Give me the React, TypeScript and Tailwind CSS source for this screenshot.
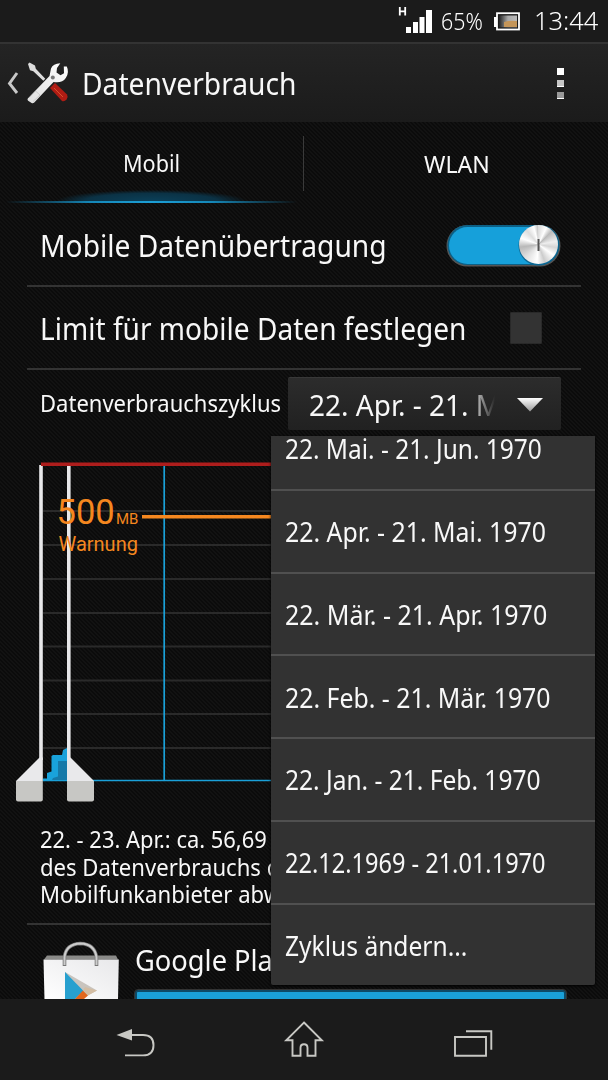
import clsx from "clsx"
import type { ReactNode } from "react"

interface MenuItem {
  label: string
  scale: string
}

const cycles: MenuItem[] = [
  { label: "22. Mai. - 21. Jun. 1970", scale: "scale-x-[0.905]" },
  { label: "22. Apr. - 21. Mai. 1970", scale: "scale-x-[0.92]" },
  { label: "22. Mär. - 21. Apr. 1970", scale: "scale-x-[0.925]" },
  { label: "22. Feb. - 21. Mär. 1970", scale: "scale-x-[0.92]" },
  { label: "22. Jan. - 21. Feb. 1970", scale: "scale-x-[0.908]" },
  { label: "22.12.1969 - 21.01.1970", scale: "scale-x-[0.872]" },
  { label: "Zyklus ändern...", scale: "scale-x-[0.91]" },
]

const gridLines = [511, 545, 579, 613, 646.5, 680.5, 714, 748]

function Label({ children, className }: { children: ReactNode; className?: string }) {
  return (
    <span className={clsx("inline-block origin-left whitespace-nowrap", className ?? "scale-x-[0.94]")}>
      {children}
    </span>
  )
}

function StatusBar() {
  return (
    <header className="flex h-[44px] shrink-0 items-center border-b-2 border-[#333] bg-[#1b1b1b] text-white">
      <svg className="ml-[396px] h-[42px] w-[40px]" viewBox="396 0 40 42">
        <path d="M399.8 7v8.500M405.2 7v8.500M399.8 11.300h5.4" stroke="#fff" strokeWidth="1.8" fill="none" />
        <path d="M406 27h5v6h-5zM413 22h5v11h-5zM419.500 17h5v16h-5zM426 10h6v23h-6z" fill="#fff" />
      </svg>
      <Label className="ml-[5px] w-[50px] scale-x-[0.93] text-[23px] font-light">65%</Label>
      <svg className="h-[42px] w-[30px]" viewBox="491 0 30 42">
        <defs>
          <linearGradient id="cell" x1="0" x2="1">
            <stop offset="0" stopColor="#222" />
            <stop offset="0.5" stopColor="#aaa" />
            <stop offset="1" stopColor="#bbb" />
          </linearGradient>
        </defs>
        <path d="M494 17h3v10h-3z" fill="#fff" />
        <rect x="497" y="13.200" width="22" height="16.300" fill="#1b1b1b" stroke="#fff" strokeWidth="1.800" />
        <rect x="499" y="15.500" width="18" height="11.800" fill="url(#cell)" />
        <path d="M504 22q5-2 13-1v6h-13z" fill="#c49558" />
      </svg>
      <Label className="ml-[13px] scale-x-[0.96] text-[26.5px] font-light">13:44</Label>
    </header>
  )
}

function ToolsIcon() {
  return (
    <svg className="h-[44px] w-[44px]" viewBox="26 61 44 44">
      <defs>
        <linearGradient id="steel" x1="1" y1="0" x2="0" y2="1">
          <stop offset="0" stopColor="#fff" />
          <stop offset="1" stopColor="#dedede" />
        </linearGradient>
      </defs>
      <path d="M28 64l1.500-1.500 5.500 3 .8 3.200 9.500 10-2 2-10-9.500-3.300-1z" fill="#ddd" />
      <path d="M50 88l5-5 12 11.500q1.500 2.500-.5 5t-4.500 1.500z" fill="#b01c14" />
      <path d="M54 88l9 9" stroke="#d9502c" strokeWidth="1" />
      <path
        d="M60.300 63.300Q53 63.500 51 68.500L49.500 76 27.800 98.500q-.8 1.300.3 2.300l3.500 2.300q1.500.6 2.700-.6L53.500 82q8.500 1.500 12.300-4 3.800-5.500 1-11.500L63.800 66.500 64 73.200 60.500 75.200 56.500 72.500 57 68z"
        fill="url(#steel)"
      />
      <circle cx="52.800" cy="77.500" r="2" fill="#777" />
      <path d="M35.500 91l4.500 4-7 6.500M35.500 91l-6 6.500" fill="none" stroke="#bbb" strokeWidth=".6" />
    </svg>
  )
}

function ActionBar() {
  return (
    <div className="flex h-[78px] shrink-0 items-center bg-gradient-to-b from-[#242424] to-[#1b1b1b] pb-px">
      <svg className="ml-[6px] h-[24px] w-[14px]" viewBox="6 70 14 24">
        <path d="M17 72l-7.500 10.500L17 92" fill="none" stroke="#c8c8c8" strokeWidth="2.900" />
      </svg>
      <div className="ml-[6px]">
        <ToolsIcon />
      </div>
      <h1 className="ml-[12px] flex-1 pt-[2px] text-[30px]">
        <Label>Datenverbrauch</Label>
      </h1>
      <div className="mr-[44px] flex flex-col gap-[5px] pt-[2px]">
        <i className="size-[7px] bg-white" />
        <i className="size-[7px] border-b border-white bg-[#c6c6c6]" />
        <i className="size-[7px] border-b border-white bg-[#999]" />
      </div>
    </div>
  )
}

function Tabs() {
  return (
    <nav className="flex h-[81px] shrink-0 text-[23.5px]">
      <div className="flex w-[304px] flex-col border-r border-[#333] [border-image:linear-gradient(transparent_18%,#3a3a3a_18%_84%,transparent_84%)_1]">
        <div className="flex flex-1 items-center justify-center pt-[15px]">
          <Label className="ml-[5px] scale-x-[0.92]">Mobil</Label>
        </div>
        <div className="h-[11px] bg-[radial-gradient(95px_11px_at_50%_100%,#0b4059,#0b3245_70%,transparent)]" />
        <div className="h-[2px] bg-[linear-gradient(90deg,transparent_2%,#1587b8_30%,#1c9fd6_50%,#1587b8_70%,transparent_98%)]" />
      </div>
      <div className="flex flex-1 items-center justify-center pt-[4px] pl-[3px]">
        <Label className="scale-x-[0.98]">WLAN</Label>
      </div>
    </nav>
  )
}

function Switch() {
  return (
    <svg className="mt-[2px] mr-[18px] h-[46px] w-[120px]" viewBox="443 222 120 46">
      <rect x="446.500" y="225" width="114" height="41.500" rx="20.700" fill="#555" />
      <rect x="447.500" y="225" width="112" height="40" rx="20" fill="#0c5f85" />
      <rect x="449" y="227" width="109" height="37" rx="18.500" fill="#16a0da" />
      <circle cx="538.500" cy="245.500" r="20" fill="#0b6894" />
      <foreignObject x="519" y="225" width="39" height="39">
        <div className="size-[39px] rounded-full bg-[conic-gradient(#ddd,#fff_25deg,#bbb_45deg,#eee_80deg,#d5d5d5_100deg,#fff_125deg,#ccc_160deg,#fff_185deg,#e0e0e0_225deg,#b9b9b9_262deg,#fff_290deg,#ddd_320deg,#fff_345deg,#bbb)]" />
      </foreignObject>
      <path d="M538.500 239v12" stroke="#555" strokeWidth="2" />
    </svg>
  )
}

function Chart() {
  return (
    <svg className="block h-[366px] w-[608px] shrink-0" viewBox="0 450 608 366">
      {gridLines.map((y) => (
        <path key={y} d={`M43 ${y}h500`} stroke="#2a2a2a" strokeWidth="1.800" />
      ))}
      <path d="M43 780.500h500M164.200 466v314" stroke="#1aa0d8" strokeWidth="1.700" />
      <path d="M43 780v-1.500h4V773l4.500-1.500V756l1.500-1h9l1-5 4-2v32z" fill="#19a2db" />
      <path d="M52 780l1-2 5-1.500V761h9v19z" fill="#1679a8" />
      <path d="M41 465v295M68.800 466v294" stroke="#e8e8ea" strokeWidth="3.600" />
      <path d="M41 464.200h502" stroke="#ad1d1c" strokeWidth="3.600" />
      <path d="M39.500 757.500h3.300V781H16z" fill="#e9e9eb" />
      <path d="M16 781h26.800v18.500q0 2-2 2H18q-2 0-2-2z" fill="#c7c7c4" />
      <path d="M70.500 757.500H67V781h27z" fill="#e9e9eb" />
      <path d="M67 781h27v18.500q0 2-2 2H69q-2 0-2-2z" fill="#c7c7c4" />
      <path d="M142 516.800h401" stroke="#f5871f" strokeWidth="3.600" />
      <g fill="#f5871f" fontFamily="Roboto, sans-serif">
        <text x="56.500" y="523.500" fontSize="34.500">500</text>
        <text x="116" y="523.500" fontSize="15">MB</text>
        <text x="58.500" y="551" fontSize="20">Warnung</text>
      </g>
    </svg>
  )
}

function StoreIcon() {
  return (
    <svg className="h-[58px] w-[76px] shrink-0" viewBox="43 941 76 58">
      <defs>
        <linearGradient id="bag" x1="0" x2="1" y1="1" y2="0">
          <stop offset="0" stopColor="#fff" />
          <stop offset="1" stopColor="#e8e8ea" />
        </linearGradient>
      </defs>
      <path d="M47 955.500h69l2 4H44z" fill="#8a8a88" />
      <path d="M43.500 959.500h75.300l-.8 40H44.500z" fill="url(#bag)" />
      <path d="M64.500 966v-9q1.500-13 16-13.500 14 .5 16 13.500v9" fill="none" stroke="#777" strokeWidth="3.600" />
      <path d="M64.500 965v-8q1.500-13 16-13.500 14 .5 16 13.500v8" fill="none" stroke="#ccc" strokeWidth="2" />
      <path d="M65 972l32 18.500L81 999H65z" fill="#c9c4be" />
      <path d="M65 972l18.500 19-8.500 8H65z" fill="#27a0cf" />
      <path d="M83 990.500l5 5-4 3.500h-9z" fill="#e2671d" />
      <path d="M85 987l12 3.500-9 5-5-5z" fill="#d3bda3" />
    </svg>
  )
}

function CycleMenu() {
  return (
    <ul className="absolute top-[436px] left-[271px] flex h-[549px] w-[324px] flex-col justify-end overflow-hidden rounded-b-[2px] bg-[#323232] text-[27px] shadow-[0_1px_3px_#000]">
      {cycles.map(({ label, scale }) => (
        <li
          key={label}
          className="flex h-[82.7px] shrink-0 items-center border-b-2 border-[#505050] pt-[2px] pl-[14px] last:h-[80.500px] last:border-b-0"
        >
          <Label className={scale}>{label}</Label>
        </li>
      ))}
    </ul>
  )
}

function NavBar() {
  return (
    <footer className="flex h-[81px] shrink-0 items-center bg-[#1b1b1b]">
      <svg className="h-[81px] w-full" viewBox="0 999 608 81" fill="none" stroke="#c8c8c4" strokeWidth="1.900">
        <path d="M131 1035h12q10.500 0 10.500 10.200T143 1055.400h-18" />
        <path d="M116.500 1035l15.500-6v11.500z" fill="#c8c8c4" stroke="none" />
        <path d="M304 1022.500l17.800 17.800h-6.300v15.500h-8v-8q0-3.500-3.500-3.500t-3.500 3.500v8h-8v-15.500h-6.300z" />
        <path d="M455 1037h31v18.700h-31zM466 1031.300h25.300v18.400" />
      </svg>
    </footer>
  )
}

export default function App() {
  return (
    <div className="relative flex h-[1080px] w-[608px] flex-col overflow-hidden bg-[repeating-linear-gradient(45deg,#0b0b0b_0_1.414px,#121212_1.414px_2.828px)] font-['Noto_Sans',sans-serif] text-[#f8f8f8]">
      <StatusBar />
      <ActionBar />
      <Tabs />
      <main className="flex min-h-0 flex-1 flex-col overflow-hidden">
        <section className="mx-[27px] flex h-[84px] shrink-0 items-center justify-between border-b-2 border-[#333] pl-[13px] text-[30px]">
          <Label className="mt-[2px] scale-x-[0.94]">Mobile Datenübertragung</Label>
          <Switch />
        </section>
        <section className="mx-[27px] flex h-[83px] shrink-0 items-center justify-between border-b-2 border-[#333] pl-[13px] text-[30px]">
          <Label className="mt-[2px] scale-x-[0.936]">Limit für mobile Daten festlegen</Label>
          <div className="mr-[39px] size-[32px] rounded-[1px] border border-[#292929] bg-[#333]" />
        </section>
        <section className="flex h-[80px] shrink-0 items-start pt-[7px] pl-[40px]">
          <div className="flex h-[53px] w-[248px] items-center text-[23.5px]">
            <Label className="mt-px scale-x-[0.937]">Datenverbrauchszyklus</Label>
          </div>
          <div className="flex h-[53px] w-[273px] items-center rounded-[2px] border-t border-[#383838] bg-gradient-to-b from-[#2c2c2c] to-[#212121] pl-[21px] text-[29px]">
            <div className="w-[186px] overflow-hidden pt-px [mask-image:linear-gradient(90deg,#000_86%,transparent)]">
              <Label className="scale-x-[0.965]">22. Apr. - 21. Mai. 1970</Label>
            </div>
            <svg className="mt-[2px] ml-[21px] h-[14px] w-[28px]" viewBox="0 0 28 14">
              <defs>
                <linearGradient id="arrow" x2="0" y2="1">
                  <stop offset="0" stopColor="#fff" />
                  <stop offset="1" stopColor="#999" />
                </linearGradient>
              </defs>
              <path d="M1 0h26L14 13.500z" fill="url(#arrow)" />
            </svg>
          </div>
        </section>
        <Chart />
        <section className="mx-[27px] h-[109px] shrink-0 border-b-2 border-[#333] pt-[10px] pl-[13px] text-[23.5px] leading-[27.7px]">
          <div><Label className="scale-x-[0.932]">22. - 23. Apr.: ca. 56,69</Label></div>
          <div><Label>des Datenverbrauchs durch</Label></div>
          <div><Label>Mobilfunkanbieter abweichen.</Label></div>
        </section>
        <section className="flex shrink-0 pt-[16px] pl-[43px]">
          <StoreIcon />
          <div className="flex w-[447px] shrink-0 flex-col pl-[16px] text-[29px] leading-[38px]">
            <Label>Google Play Store</Label>
            <div className="mt-[11px] h-[20px] rounded-[3px] border-2 border-[#0e4a66] bg-[#1aa0d8] outline outline-[#333]" />
          </div>
        </section>
      </main>
      <NavBar />
      <CycleMenu />
    </div>
  )
}
